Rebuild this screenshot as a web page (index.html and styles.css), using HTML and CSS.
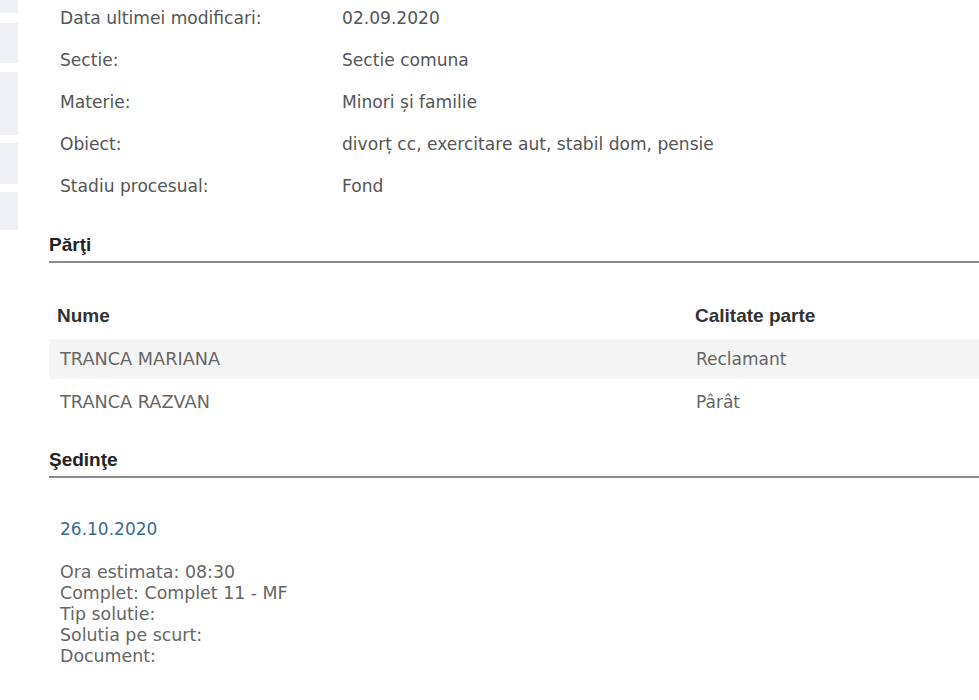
FILE: index.html
```html
<!DOCTYPE html>
<html lang="ro">
<head>
<meta charset="utf-8">
<title>Dosar</title>
<link rel="stylesheet" href="styles.css">
</head>
<body>
<div class="page">
  <aside class="side">
    <div class="tab t1"></div>
    <div class="tab t2"></div>
    <div class="tab t3"></div>
    <div class="tab t4"></div>
    <div class="tab t5"></div>
  </aside>
  <main class="main">
    <div class="info">
      <div class="info-row"><span class="label">Data ultimei modificari:</span><span class="value">02.09.2020</span></div>
      <div class="info-row"><span class="label">Sectie:</span><span class="value">Sectie comuna</span></div>
      <div class="info-row"><span class="label">Materie:</span><span class="value">Minori și familie</span></div>
      <div class="info-row"><span class="label">Obiect:</span><span class="value">divorț cc, exercitare aut, stabil dom, pensie</span></div>
      <div class="info-row"><span class="label">Stadiu procesual:</span><span class="value">Fond</span></div>
    </div>

    <h2 class="section-title parti">Părţi</h2>
    <div class="parties">
      <div class="p-row p-head"><span class="c-name">Nume</span><span class="c-role">Calitate parte</span></div>
      <div class="p-row shaded"><span class="c-name">TRANCA MARIANA</span><span class="c-role">Reclamant</span></div>
      <div class="p-row"><span class="c-name">TRANCA RAZVAN</span><span class="c-role">Pârât</span></div>
    </div>

    <h2 class="section-title sedinte">Şedinţe</h2>
    <div class="hearing">
      <div class="h-date">26.10.2020</div>
      <div class="h-details">
        <div>Ora estimata: 08:30</div>
        <div>Complet: Complet 11 - MF</div>
        <div>Tip solutie:</div>
        <div>Solutia pe scurt:</div>
        <div>Document:</div>
      </div>
    </div>
  </main>
</div>
</body>
</html>
```

FILE: styles.css
```css
html, body {
  margin: 0;
  padding: 0;
  background: #ffffff;
}
body {
  font-family: "DejaVu Sans", Verdana, sans-serif;
  color: #555555;
  overflow: hidden;
}
.page {
  display: flex;
  align-items: flex-start;
  width: 979px;
  height: 700px;
}
.side {
  width: 18px;
  flex: 0 0 18px;
  display: flex;
  flex-direction: column;
}
.tab {
  background: #eff0f5;
}
.t1 { height: 13px; margin-bottom: 10px; }
.t2 { height: 40px; margin-bottom: 9px; }
.t3 { height: 63px; margin-bottom: 8px; }
.t4 { height: 41px; margin-bottom: 8px; }
.t5 { height: 38px; }

.main {
  flex: 1;
  margin-left: 31px;
  min-width: 0;
}
.info {
  margin-top: -3px;
}
.info-row {
  display: flex;
  align-items: center;
  height: 42px;
  font-size: 17.1px;
  color: #555555;
}
.label {
  width: 282px;
  padding-left: 11px;
  flex: 0 0 auto;
}
.value {
  white-space: nowrap;
}
.section-title {
  font-family: "Liberation Sans", Arial, sans-serif;
  font-weight: bold;
  font-size: 19px;
  color: #222222;
  margin: 0;
  padding: 0 0 6px 0;
  border-bottom: 2px solid #8a8a8a;
  line-height: 20px;
}
.parti {
  margin-top: 28px;
}
.parties {
  margin-top: 34px;
}
.p-row {
  display: flex;
  align-items: center;
  height: 42px;
  font-size: 17px;
  color: #666666;
}
.p-row .c-name {
  font-size: 17.7px;
}
.p-row.shaded {
  background: #f5f5f5;
  height: 40px;
  margin-bottom: 2px;
}
.p-head {
  font-family: "Liberation Sans", Arial, sans-serif;
  font-weight: bold;
  font-size: 19px;
  color: #333333;
  box-sizing: border-box;
  padding-bottom: 4px;
}
.p-head .c-name {
  font-size: 19px;
}
.c-name {
  width: 638px;
  padding-left: 11px;
  flex: 0 0 auto;
  box-sizing: border-box;
}
.p-head .c-name {
  padding-left: 8px;
}
.c-role {
  padding-left: 9px;
}
.p-head .c-role {
  padding-left: 8px;
}
.sedinte {
  margin-top: 27px;
}
.hearing {
  padding-left: 11px;
}
.h-date {
  margin-top: 41px;
  font-size: 17px;
  color: #3b6b8c;
}
.h-details {
  margin-top: 23px;
  font-size: 17.4px;
  line-height: 21px;
  color: #666666;
}
```
